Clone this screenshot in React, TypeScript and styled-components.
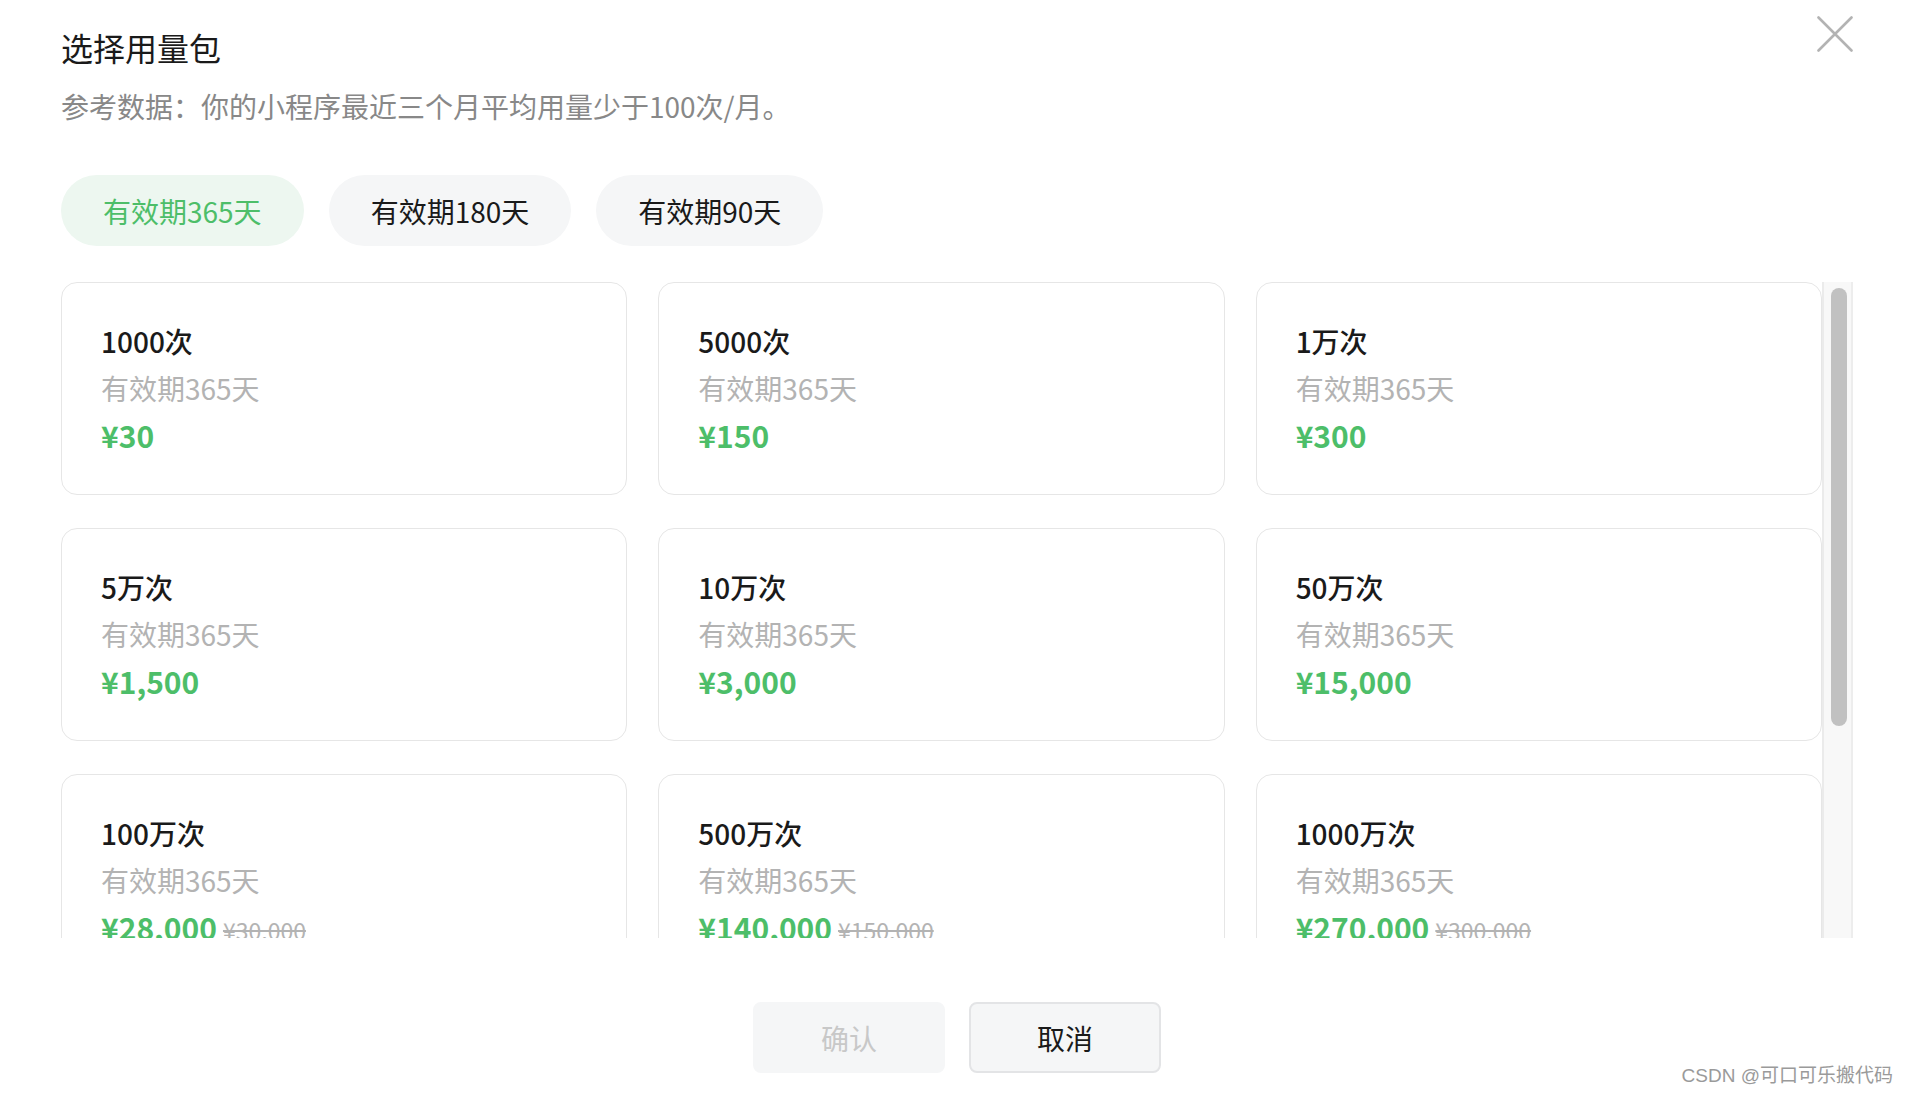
import React from 'react';
import styled, { createGlobalStyle } from 'styled-components';

const GlobalStyle = createGlobalStyle`
  html, body {
    margin: 0;
    padding: 0;
    background: #fff;
  }
  body {
    font-family: "Noto Sans CJK SC", "Noto Sans", sans-serif;
    color: #1a1a1a;
  }
`;

const green = '#4dbe69';

const packages = [
  { name: '1000次', price: '¥30' },
  { name: '5000次', price: '¥150' },
  { name: '1万次', price: '¥300' },
  { name: '5万次', price: '¥1,500' },
  { name: '10万次', price: '¥3,000' },
  { name: '50万次', price: '¥15,000' },
  { name: '100万次', price: '¥28,000', old: '¥30,000' },
  { name: '500万次', price: '¥140,000', old: '¥150,000' },
  { name: '1000万次', price: '¥270,000', old: '¥300,000' },
];

const tabs = ['有效期365天', '有效期180天', '有效期90天'];

const App = () => {
  return (
    <>
      <GlobalStyle />
      <Page>
        <CloseButton aria-label="关闭">
          <svg width="36" height="36" viewBox="0 0 36 36">
            <path d="M1.5 1.5 L34.5 34.5 M34.5 1.5 L1.5 34.5" stroke="#b3b3b3" strokeWidth="2.6" strokeLinecap="round" />
          </svg>
        </CloseButton>
        <Title>选择用量包</Title>
        <Subtitle>参考数据：你的小程序最近三个月平均用量少于100次/月。</Subtitle>

        <Tabs>
          {tabs.map((t, i) => (
            <Tab key={t} $active={i === 0}>{t}</Tab>
          ))}
        </Tabs>

        <ScrollArea>
          <Grid>
            {packages.map((p) => (
              <Card key={p.name}>
                <CardName>{p.name}</CardName>
                <CardPeriod>有效期365天</CardPeriod>
                <PriceRow>
                  <Price>{p.price}</Price>
                  {p.old && <OldPrice>{p.old}</OldPrice>}
                </PriceRow>
              </Card>
            ))}
          </Grid>
          <Track>
            <Thumb />
          </Track>
        </ScrollArea>

        <Footer>
          <Button $disabled>确认</Button>
          <Button $outlined>取消</Button>
        </Footer>

        <Watermark>CSDN @可口可乐搬代码</Watermark>
      </Page>
    </>
  );
};

const Page = styled.div`
  position: relative;
  box-sizing: border-box;
  width: 1908px;
  height: 1094px;
  padding: 23px 55px 0 61px;
  overflow: hidden;
`;

const CloseButton = styled.div`
  position: absolute;
  top: 16px;
  right: 55px;
  width: 36px;
  height: 36px;
  svg {
    display: block;
  }
`;

const Title = styled.div`
  font-size: 32px;
  line-height: 48px;
  color: #1a1a1a;
`;

const Subtitle = styled.div`
  margin-top: 13px;
  font-size: 28px;
  line-height: 44px;
  color: #888;
`;

const Tabs = styled.div`
  display: flex;
  gap: 25px;
  margin-top: 47px;
`;

const Tab = styled.div<{ $active?: boolean }>`
  height: 71px;
  padding: 0 42px;
  border-radius: 36px;
  display: flex;
  align-items: center;
  font-size: 28px;
  background: ${(p) => (p.$active ? '#edf7f0' : '#f5f6f7')};
  color: ${(p) => (p.$active ? green : '#1a1a1a')};
`;

const ScrollArea = styled.div`
  display: flex;
  margin-top: 36px;
  height: 656px;
`;

const Grid = styled.div`
  flex: 1;
  display: grid;
  grid-template-columns: repeat(3, 1fr);
  column-gap: 31px;
  row-gap: 33px;
  align-content: start;
  overflow: hidden;
`;

const Card = styled.div`
  box-sizing: border-box;
  height: 213px;
  padding: 35px 39px;
  border: 1px solid #e6e6e6;
  border-radius: 16px;
  background: #fff;
`;

const CardName = styled.div`
  font-size: 28px;
  line-height: 47px;
  font-weight: 500;
  color: #1a1a1a;
`;

const CardPeriod = styled.div`
  font-size: 28px;
  line-height: 47px;
  color: #b3b3b3;
`;

const PriceRow = styled.div`
  display: flex;
  align-items: baseline;
  gap: 6px;
  line-height: 47px;
`;

const Price = styled.span`
  font-size: 30px;
  font-weight: 600;
  color: ${green};
`;

const OldPrice = styled.span`
  font-size: 23px;
  color: #b3b3b3;
  text-decoration: line-through;
`;

const Track = styled.div`
  box-sizing: border-box;
  width: 31px;
  height: 100%;
  padding: 6px 6px 0 7px;
  background: #f8f8f8;
  border-left: 2px solid #ebebeb;
  border-right: 2px solid #ededed;
`;

const Thumb = styled.div`
  width: 16px;
  height: 438px;
  border-radius: 8px;
  background: #c1c1c1;
`;

const Footer = styled.div`
  display: flex;
  justify-content: center;
  gap: 24px;
  margin-top: 64px;
`;

const Button = styled.div<{ $disabled?: boolean; $outlined?: boolean }>`
  box-sizing: border-box;
  width: 192px;
  height: 71px;
  border-radius: 8px;
  display: flex;
  align-items: center;
  justify-content: center;
  font-size: 28px;
  background: #f5f6f7;
  border: ${(p) => (p.$outlined ? '2px solid #e3e4e6' : '2px solid #f5f6f7')};
  color: ${(p) => (p.$disabled ? '#c8c8c8' : '#1a1a1a')};
`;

const Watermark = styled.div`
  position: absolute;
  right: 15px;
  bottom: 7px;
  font-family: "Liberation Sans", "Noto Sans CJK SC", sans-serif;
  font-size: 19px;
  color: #9a9a9a;
`;

export default App;
